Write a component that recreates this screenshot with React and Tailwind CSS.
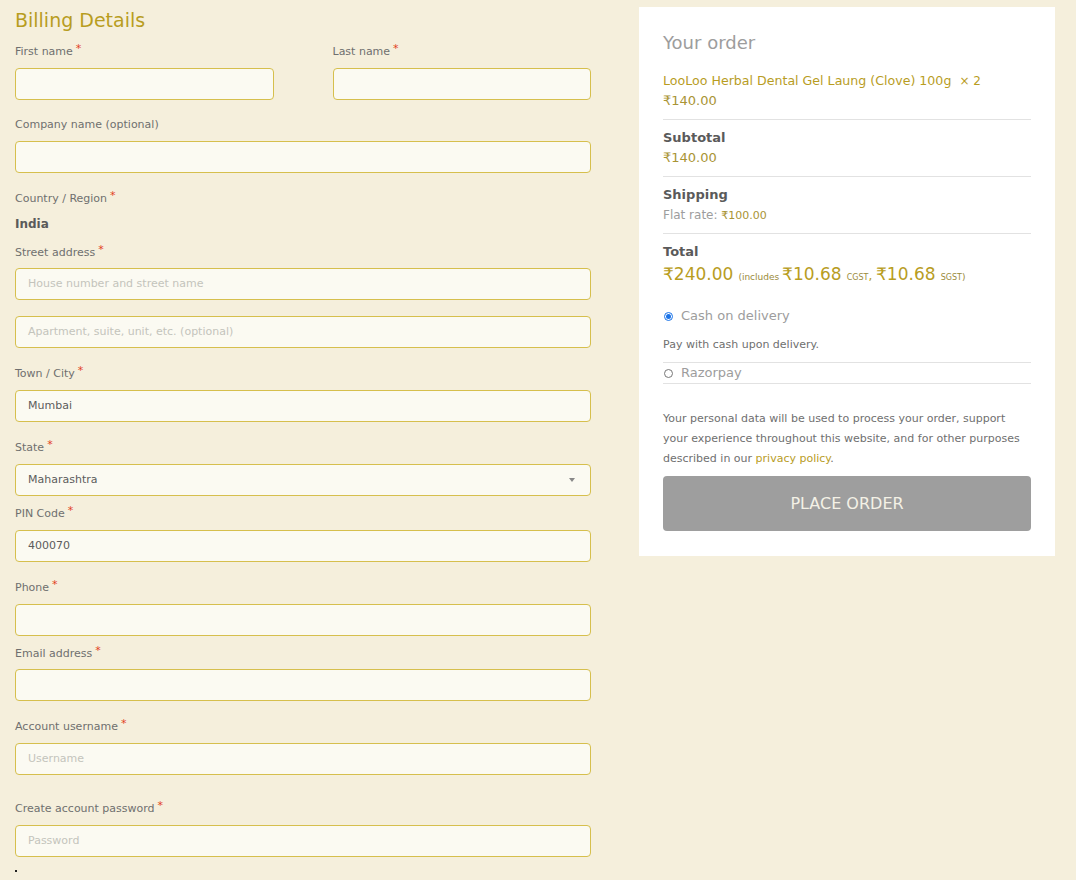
import React from "react";

const F = "font-['DejaVu_Sans',sans-serif]";

function Label({ children, req = true, className = "" }) {
  return (
    <div className={`h-4 pt-[1px] text-[11px] leading-4 text-[#6f6f6f] ${className}`}>
      {children}
      {req && <span className="ml-[3px] relative -top-[3px] text-[11px] text-[#e2401c]">*</span>}
    </div>
  );
}

function Input({ value, placeholder, className = "", children }) {
  return (
    <div
      className={`h-8 rounded-[4px] border border-[#d6bf4d] bg-[#fbfaf2] px-3 flex items-center text-[11px] ${className}`}
    >
      {value ? (
        <span className="text-[#5c5c5c]">{value}</span>
      ) : placeholder ? (
        <span className="text-[#c4c4bc]">{placeholder}</span>
      ) : null}
      {children}
    </div>
  );
}

export default function App() {
  return (
    <div className={`min-h-[880px] w-[1076px] bg-[#f5efdc] ${F}`}>
      <div className="flex items-start">
        {/* Left column */}
        <div className="ml-[15px] w-[576px] pt-[6px]">
          <h2 className="h-7 text-[19px] leading-7 text-[#b89d1f]">Billing Details</h2>
          <div className="mt-[9px] flex gap-[59px]">
            <div className="flex-1">
              <Label>First name</Label>
              <Input className="mt-[9px]" />
            </div>
            <div className="flex-1">
              <Label>Last name</Label>
              <Input className="mt-[9px]" />
            </div>
          </div>
          <Label req={false} className="mt-4">Company name (optional)</Label>
          <Input className="mt-[9px]" />
          <Label className="mt-[17px]">Country / Region</Label>
          <div className="mt-2 h-5 text-[12px] font-bold leading-5 text-[#5a5a5a]">India</div>
          <Label className="mt-[10px]">Street address</Label>
          <Input className="mt-2" placeholder="House number and street name" />
          <Input className="mt-4" placeholder="Apartment, suite, unit, etc. (optional)" />
          <Label className="mt-[17px]">Town / City</Label>
          <Input className="mt-[9px]" value="Mumbai" />
          <Label className="mt-[17px]">State</Label>
          <Input className="mt-[9px] justify-between" value="Maharashtra">
            <span className="mr-[3px] h-0 w-0 border-x-[3px] border-t-[4px] border-x-transparent border-t-[#888]" />
          </Input>
          <Label className="mt-[9px]">PIN Code</Label>
          <Input className="mt-[9px]" value="400070" />
          <Label className="mt-[17px]">Phone</Label>
          <Input className="mt-[9px]" />
          <Label className="mt-[9px]">Email address</Label>
          <Input className="mt-2" />
          <Label className="mt-[17px]">Account username</Label>
          <Input className="mt-[9px]" placeholder="Username" />
          <Label className="mt-[25px]">Create account password</Label>
          <Input className="mt-[9px]" placeholder="Password" />
          <div className="mt-[13px] h-[2px] w-[2px] bg-[#222]" />
        </div>

        {/* Right column */}
        <div className="ml-12 mt-[7px] w-[416px] bg-white px-6 pt-[24px] pb-[25px]">
          <h3 className="h-6 text-[18px] leading-6 text-[#9d9d9d]">Your order</h3>
          <div className="mt-[16px] h-5 whitespace-nowrap text-[12.6px] leading-5 text-[#b89d1f]">
            LooLoo Herbal Dental Gel Laung (Clove) 100g <span className="ml-1 text-[12px]">× 2</span>
          </div>
          <div className="h-5 text-[13px] leading-5 text-[#a99434]">₹140.00</div>
          <div className="mt-2 border-t border-[#e2e2e2]" />
          <div className="mt-2 h-5 text-[13px] font-bold leading-5 text-[#5a5a5a]">Subtotal</div>
          <div className="h-5 text-[13px] leading-5 text-[#a99434]">₹140.00</div>
          <div className="mt-2 border-t border-[#e2e2e2]" />
          <div className="mt-2 h-5 text-[13px] font-bold leading-5 text-[#5a5a5a]">Shipping</div>
          <div className="h-5 text-[12px] leading-5 text-[#9d9d9d]">
            Flat rate: <span className="text-[11px] text-[#a99434]">₹100.00</span>
          </div>
          <div className="mt-2 border-t border-[#e2e2e2]" />
          <div className="mt-2 h-5 text-[13px] font-bold leading-5 text-[#5a5a5a]">Total</div>
          <div className="h-6 leading-6 text-[#b89d1f] whitespace-nowrap">
            <span className="text-[17px]">₹240.00</span>{" "}
            <span className="text-[9px] text-[#9a8a3a]">(includes </span>
            <span className="text-[17px]">₹10.68</span>{" "}
            <span className="text-[8px] text-[#9a8a3a]">CGST</span>
            <span className="text-[12px]">, </span>
            <span className="text-[17px]">₹10.68</span>{" "}
            <span className="text-[8px] text-[#9a8a3a]">SGST</span>
            <span className="text-[9px] text-[#9a8a3a]">)</span>
          </div>

          <div className="mt-5 flex h-5 items-center text-[13px] text-[#9d9d9d]">
            <span className="ml-[1px] flex h-[9px] w-[9px] items-center justify-center rounded-full border border-[#1a73e8]">
              <span className="h-[5px] w-[5px] rounded-full bg-[#1a73e8]" />
            </span>
            <span className="ml-[8px]">Cash on delivery</span>
          </div>
          <div className="mt-[9px] h-5 text-[11px] leading-5 text-[#6f6f6f]">Pay with cash upon delivery.</div>
          <div className="mt-[7px] border-t border-[#e2e2e2]" />
          <div className="flex h-5 items-center text-[13px] text-[#9d9d9d]">
            <span className="ml-[1px] h-[9px] w-[9px] rounded-full border border-[#777]" />
            <span className="ml-[8px]">Razorpay</span>
          </div>
          <div className="border-t border-[#e2e2e2]" />

          <p className="mt-[25px] text-[11px] leading-5 text-[#6f6f6f]">
            Your personal data will be used to process your order, support your experience
            throughout this website, and for other purposes described in our{" "}
            <a className="text-[#b89d1f]">privacy policy</a>.
          </p>
          <button className="mt-[7px] flex h-[55px] w-full items-center justify-center rounded-[4px] bg-[#9e9e9e] text-[16px] text-[#f4f1e6]">
            PLACE ORDER
          </button>
        </div>
      </div>
    </div>
  );
}
